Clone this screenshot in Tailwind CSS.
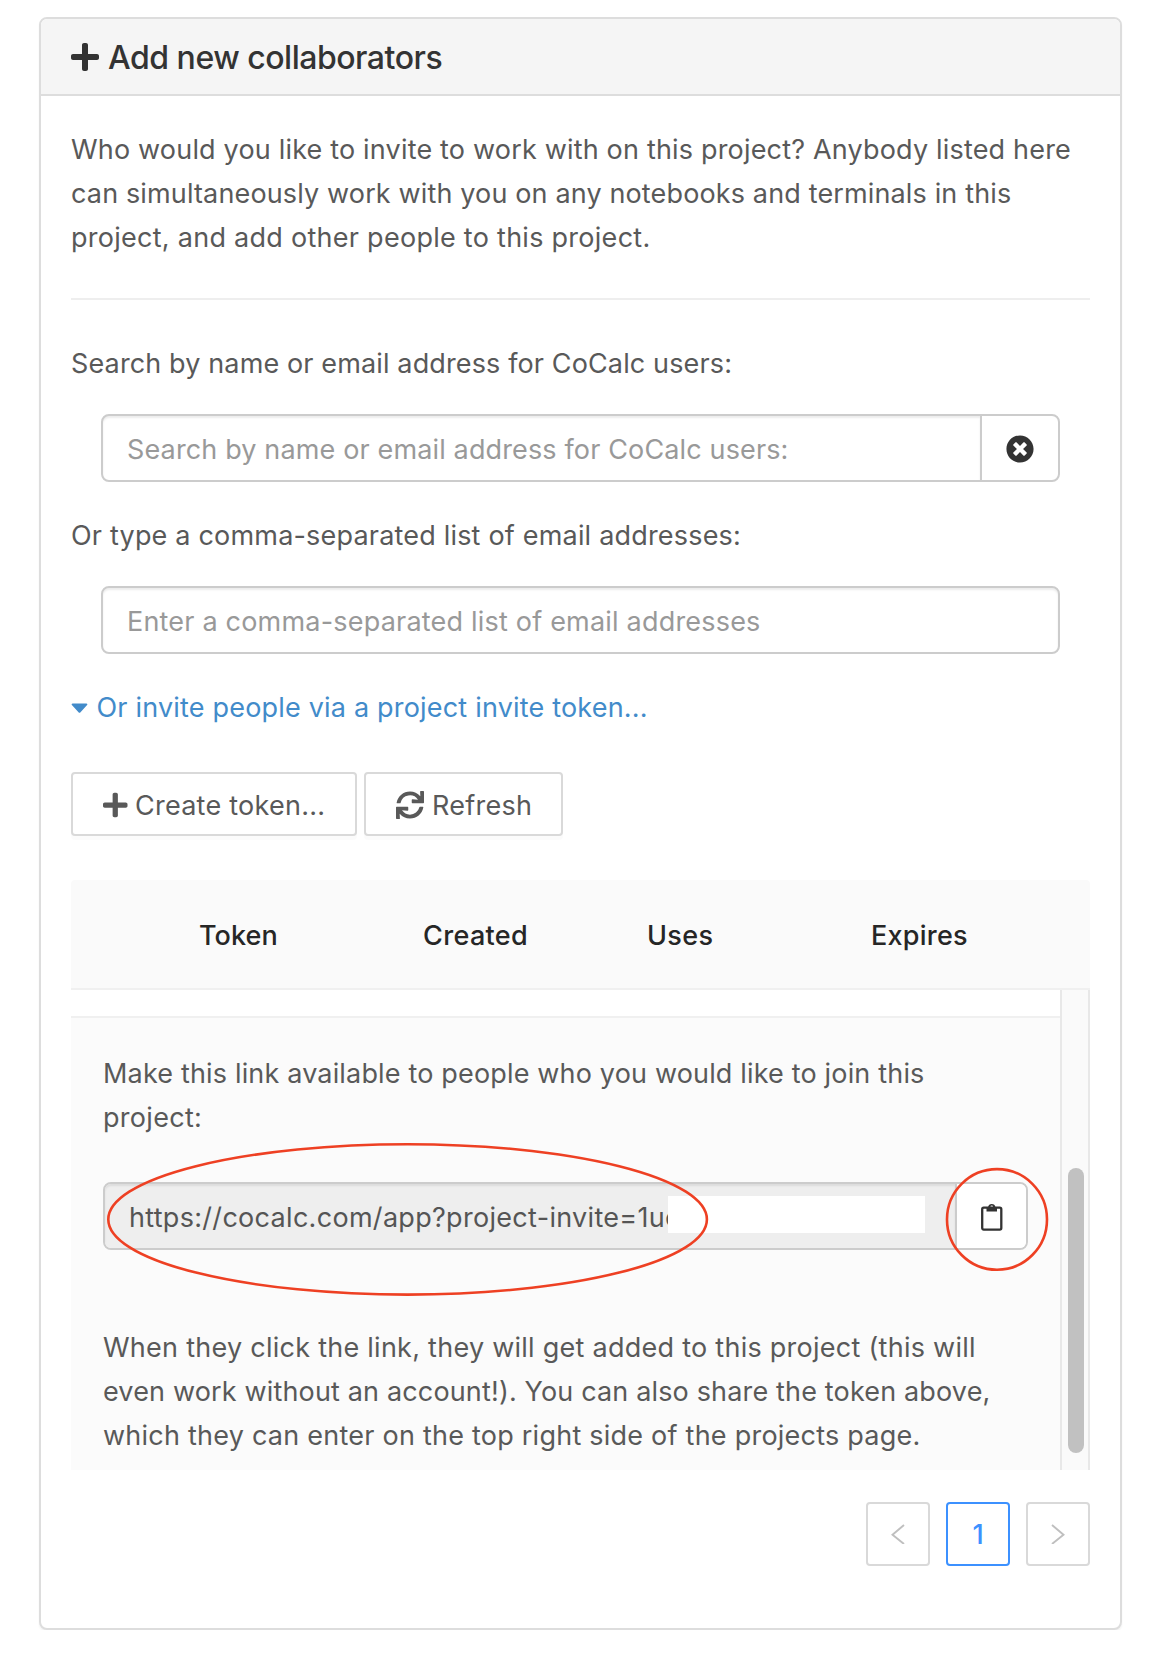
<!DOCTYPE html>
<html lang="en">
<head>
<meta charset="utf-8">
<title>Add new collaborators</title>
<script src="https://cdn.jsdelivr.net/npm/@tailwindcss/browser@4"></script>
</head>
<body class="bg-white font-[Inter,sans-serif] text-[27px] leading-[44px] text-[#595959]">
<main class="relative ml-[39px] mt-[17px] h-[1613px] w-[1083px] rounded-[8px] border-2 border-[#ddd] bg-white shadow-[0_2px_2px_rgba(0,0,0,0.05)]">
  <header class="flex h-[77px] items-center gap-[9px] rounded-t-[6px] border-b-2 border-[#ddd] bg-[#f5f5f5] pl-[30px] text-[#333]">
    <svg class="h-[32px] w-[28px]" viewBox="0 0 448 512" fill="currentColor"><path d="M416 208H272V64c0-17.67-14.33-32-32-32h-32c-17.67 0-32 14.33-32 32v144H32c-17.67 0-32 14.33-32 32v32c0 17.67 14.33 32 32 32h144v144c0 17.67 14.33 32 32 32h32c17.67 0 32-14.33 32-32V304h144c17.67 0 32-14.33 32-32v-32c0-17.67-14.33-32-32-32z"/></svg>
    <h4 class="whitespace-nowrap pt-[2px] text-[32px] font-medium tracking-[-0.48px]">Add new collaborators</h4>
  </header>

  <div class="flex flex-col px-[30px] pt-[32px]">
    <p class="whitespace-nowrap">
      <span class="block tracking-[0.18px]">Who would you like to invite to work with on this project? Anybody listed here</span>
      <span class="block tracking-[0.14px]">can simultaneously work with you on any notebooks and terminals in this</span>
      <span class="block tracking-[0.27px]">project, and add other people to this project.</span>
    </p>
    <hr class="mt-[38px] border-t-2 border-[#eee]">

    <label class="mt-[42px] tracking-[0.13px]">Search by name or email address for CoCalc users:</label>
    <div class="mx-[30px] mt-[28px] flex h-[68px] rounded-[8px] border-2 border-[#ccc] bg-white">
      <div class="flex flex-1 items-center rounded-l-[6px] pl-[24px] pt-[3px] tracking-[0.14px] text-[#999] shadow-[inset_0_2px_2px_rgba(0,0,0,0.075)]">Search by name or email address for CoCalc users:</div>
      <button class="flex w-[78px] items-center border-l-2 border-[#ccc] pl-[24px] pt-[2px] text-[#333]">
        <svg class="size-[28px]" viewBox="0 0 512 512" fill="currentColor"><path d="M256 8C119 8 8 119 8 256s111 248 248 248 248-111 248-248S393 8 256 8zm121.6 313.1c4.7 4.7 4.7 12.3 0 17L338 377.6c-4.7 4.7-12.3 4.7-17 0L256 312l-65.1 65.6c-4.7 4.7-12.3 4.7-17 0L134.4 338c-4.7-4.7-4.7-12.3 0-17l65.6-65-65.6-65.1c-4.7-4.7-4.7-12.3 0-17l39.6-39.6c4.7-4.7 12.3-4.7 17 0l65 65.7 65.1-65.6c4.7-4.7 12.3-4.7 17 0l39.6 39.6c4.7 4.7 4.7 12.3 0 17L312 256l65.6 65.1z"/></svg>
      </button>
    </div>

    <label class="mt-[32px] tracking-[0.19px]">Or type a comma-separated list of email addresses:</label>
    <div class="mx-[30px] mt-[28px] flex h-[68px] items-center rounded-[8px] border-2 border-[#ccc] bg-white pl-[24px] pt-[3px] tracking-[0.2px] text-[#999] shadow-[inset_0_2px_2px_rgba(0,0,0,0.075)]">Enter a comma-separated list of email addresses</div>

    <a class="mt-[32px] flex items-center gap-[8.5px] whitespace-nowrap tracking-[0.19px] text-[#428bca]">
      <svg class="h-[12px] w-[17px]" viewBox="0 0 17 12" fill="currentColor"><path d="M1.6 1.4h13.8c.9 0 1.3 1 .7 1.6L9.5 10.2a1.4 1.4 0 0 1-2 0L.9 3c-.6-.6-.2-1.6.7-1.6z"/></svg>
      <span>Or invite people via a project invite token...</span>
    </a>

    <div class="mt-[42px] flex gap-[7px]">
      <button class="flex h-[64px] w-[286px] items-center whitespace-nowrap rounded-[4px] border-2 border-[#d9d9d9] bg-white pl-[30px] pt-[2px] shadow-[0_4px_0_rgba(0,0,0,0.015)]">
        <svg class="mr-[7.5px] h-[28px] w-[24.5px]" viewBox="0 0 448 512" fill="currentColor"><path d="M416 208H272V64c0-17.67-14.33-32-32-32h-32c-17.67 0-32 14.33-32 32v144H32c-17.67 0-32 14.33-32 32v32c0 17.67 14.33 32 32 32h144v144c0 17.67 14.33 32 32 32h32c17.67 0 32-14.33 32-32V304h144c17.67 0 32-14.33 32-32v-32c0-17.67-14.33-32-32-32z"/></svg>
        <span class="pt-px tracking-[0.25px]">Create token...</span>
      </button>
      <button class="flex h-[64px] w-[199px] items-center whitespace-nowrap rounded-[4px] border-2 border-[#d9d9d9] bg-white pl-[30px] pt-[2px] shadow-[0_4px_0_rgba(0,0,0,0.015)]">
        <svg class="mr-[8px] size-[28px]" viewBox="0 0 512 512" fill="currentColor"><path d="M440.65 12.57l4 82.77A247.16 247.16 0 0 0 255.83 8C134.73 8 33.91 94.92 12.29 209.82A12 12 0 0 0 24.09 224h49.05a12 12 0 0 0 11.67-9.26 175.91 175.91 0 0 1 317-56.94l-101.46-4.86a12 12 0 0 0-12.57 12v47.41a12 12 0 0 0 12 12H500a12 12 0 0 0 12-12V12a12 12 0 0 0-12-12h-47.37a12 12 0 0 0-11.98 12.57zM255.83 432a175.61 175.61 0 0 1-146-77.8l101.8 4.87a12 12 0 0 0 12.57-12v-47.4a12 12 0 0 0-12-12H12a12 12 0 0 0-12 12V500a12 12 0 0 0 12 12h47.35a12 12 0 0 0 12-12.6l-4.15-82.57A247.17 247.17 0 0 0 255.83 504c121.11 0 221.93-86.92 243.55-201.82a12 12 0 0 0-11.8-14.18h-49.05a12 12 0 0 0-11.67 9.26A175.86 175.86 0 0 1 255.83 432z"/></svg>
        <span class="pt-px tracking-[0.25px]">Refresh</span>
      </button>
    </div>

    <section class="mt-[44px]">
      <div class="flex h-[110px] items-center rounded-t-[4px] border-b-2 border-[#f0f0f0] bg-[#fafafa] pl-[128px] pt-[3px] font-medium text-[#262626]">
        <div class="w-[224px] tracking-[0.1px]">Token</div>
        <div class="w-[224px] tracking-[0.35px]">Created</div>
        <div class="w-[224px] tracking-[0.35px]">Uses</div>
        <div class="tracking-[0.25px]">Expires</div>
      </div>
      <div class="flex h-[480px]">
        <div class="flex w-[989px] flex-col">
          <div class="h-[28px] border-b-2 border-[#f0f0f0]"></div>
          <div class="flex-1 bg-[#fbfbfb] px-[32px] pt-[34px]">
            <p class="whitespace-nowrap">
              <span class="block tracking-[0.165px]">Make this link available to people who you would like to join this</span>
              <span class="block tracking-[0.3px]">project:</span>
            </p>
            <div class="mt-[42px] flex h-[68px] rounded-[8px] border-2 border-[#ccc]">
              <div class="flex w-[850px] items-center rounded-l-[6px] bg-[#eee] pl-[24px] text-[#555] shadow-[inset_0_2px_2px_rgba(0,0,0,0.075)]">
                <span class="w-[539px] whitespace-nowrap pt-[3px] tracking-[0.3px]">https://cocalc.com/app?project-invite=1ue</span>
                <span class="relative mb-[3px] h-[37px] w-[257px] bg-white"></span>
              </div>
              <button class="flex flex-1 items-center rounded-r-[6px] border-l-2 border-[#ccc] bg-white pl-[24px] pt-[2px] text-[#333]">
                <svg class="h-[28px] w-[22px]" viewBox="0 0 22 28"><rect x="1.2" y="4.7" width="19.1" height="21.9" rx="1.5" fill="none" stroke="#333" stroke-width="2.3"/><path fill="#333" fill-rule="evenodd" d="M5.5 4h1.6a3.7 3.7 0 0 1 7.3 0H16v4.6H5.5zM10.75 2.5a1.3 1.3 0 1 0 0 2.6 1.3 1.3 0 0 0 0-2.6z"/></svg>
              </button>
            </div>
            <p class="mt-[76px] whitespace-nowrap">
              <span class="block tracking-[0.26px]">When they click the link, they will get added to this project (this will</span>
              <span class="block tracking-[0.155px]">even work without an account!). You can also share the token above,</span>
              <span class="block tracking-[0.235px]">which they can enter on the top right side of the projects page.</span>
            </p>
          </div>
        </div>
        <div class="w-[30px] border-x-2 border-[#e8e8e8] bg-[#fafafa] pl-[6px] pt-[178px]">
          <div class="h-[285px] w-[16px] rounded-full bg-[#c1c1c1]"></div>
        </div>
      </div>
    </section>

    <nav class="mt-[32px] flex justify-end gap-[16px]">
      <button class="flex size-[64px] items-center justify-center rounded-[4px] border-2 border-[#d9d9d9]">
        <svg class="h-[20px] w-[14px]" viewBox="0 0 14 20" fill="none" stroke="#bfbfbf" stroke-width="1.9"><path d="M13 1 1.5 10.7 13 20"/></svg>
      </button>
      <button class="flex size-[64px] items-center justify-center rounded-[4px] border-2 border-[#3c91ff] pt-px font-medium text-[#3c91ff]">1</button>
      <button class="flex size-[64px] items-center justify-center rounded-[4px] border-2 border-[#d9d9d9]">
        <svg class="h-[20px] w-[14px]" viewBox="0 0 14 20" fill="none" stroke="#bfbfbf" stroke-width="1.9"><path d="M1 1 12.5 10.7 1 20"/></svg>
      </button>
    </nav>
  </div>

  <!-- Annotation rings over the link and the copy button -->
  <svg class="absolute left-[66px] top-[1123px] h-[155px] w-[942px]" viewBox="0 0 942 155" fill="none" stroke="#ee4023" stroke-width="2.6">
    <ellipse cx="300.6" cy="77.4" rx="299.3" ry="75.2"/>
    <ellipse cx="890" cy="77.4" rx="50" ry="50.3"/>
  </svg>
</main>
</body>
</html>
